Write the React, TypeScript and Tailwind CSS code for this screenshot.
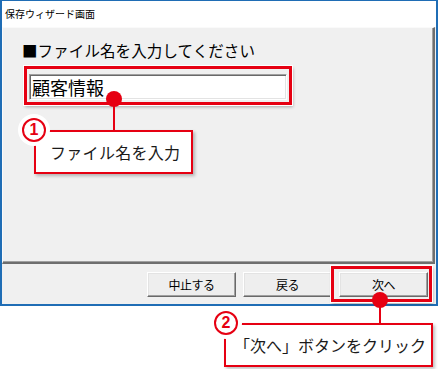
import React from "react";

const RED = "#e60012";

function Num({ n, x, y }: { n: string; x: number; y: number }) {
  return (
    <div
      className="absolute w-[32px] h-[32px] rounded-full bg-white flex items-center justify-center"
      style={{ left: x - 16, top: y - 16 }}
    >
      <div className="w-[24px] h-[24px] rounded-full border-2 border-[#e60012] flex items-center justify-center text-[#e60012] font-bold text-[16px] leading-none font-['Liberation_Sans',Arial,sans-serif]">
        {n}
      </div>
    </div>
  );
}

function Btn({ label }: { label: string }) {
  return (
    <div className="w-[89px] h-[25px] bg-[#eeeeee] border border-t-white border-l-white border-r-[#696969] border-b-[#696969] shadow-[inset_-1px_-1px_0_#a0a0a0,inset_1px_1px_0_#e3e3e3] flex items-center justify-center text-[12px] tracking-[-0.5px] text-black">
      {label}
    </div>
  );
}

export default function App() {
  return (
    <div className="relative w-[438px] h-[369px] bg-white overflow-hidden font-['Noto_Sans_CJK_JP','Noto_Sans',sans-serif]">
      {/* window */}
      <div className="w-[438px] h-[306px] border-x-2 border-b-2 border-t border-[#1f6db5] flex flex-col">
        <div className="h-[26px] bg-white flex items-center pl-[3px] text-[10px] text-black leading-none">
          保存ウィザード画面
        </div>
        <div className="flex-1 bg-[#f0f0f0] flex flex-col pr-[1px]">
          <div className="h-[237px] border-t border-l border-t-[#fafafa] border-l-[#fafafa] border-r-2 border-b-2 border-r-[#6e6e6e] border-b-[#6e6e6e] shadow-[inset_-1px_-1px_0_#a0a0a0] pt-[12px] pl-[19px] flex flex-col items-start">
            <div className="text-[15.5px] leading-[20px] text-black tracking-[0.1px]">
              ■ファイル名を入力してください
            </div>
            <div className="ml-[7px] mt-[14px] w-[258px] h-[26px] bg-white border border-t-[#a0a0a0] border-l-[#a0a0a0] border-r-white border-b-white shadow-[inset_1px_1px_0_#696969,inset_-1px_-1px_0_#e3e3e3] flex items-center pl-[2px] text-[18px] leading-none text-black">
              顧客情報
            </div>
          </div>
          <div className="flex-1 flex justify-end items-start pt-[8px] pr-[7px] gap-[7px]">
            <Btn label="中止する" />
            <Btn label="戻る" />
            <Btn label="次へ" />
          </div>
        </div>
      </div>

      {/* highlight 1 */}
      <div className="absolute left-[24px] top-[66px] w-[268px] h-[39px] border-[3px] border-[#e60012] shadow-[0_0_0_1px_#ffffff,1px_2px_3px_rgba(0,0,0,0.3)]" />
      {/* highlight 2 */}
      <div className="absolute left-[331px] top-[266px] w-[101px] h-[36px] border-[3px] border-[#e60012] shadow-[0_0_0_1px_#ffffff,1px_2px_3px_rgba(0,0,0,0.3)]" />

      {/* connector lines */}
      <div className="absolute left-[113px] top-[99px] w-[2px] h-[32px] bg-[#e60012]" />
      <div className="absolute left-[379px] top-[300px] w-[2px] h-[24px] bg-[#e60012]" />

      {/* dots */}
      <div className="absolute left-[106px] top-[91px] w-[16px] h-[16px] rounded-full bg-[#e60012]" />
      <div className="absolute left-[372px] top-[292px] w-[16px] h-[16px] rounded-full bg-[#e60012]" />

      {/* callout 1 */}
      <div className="absolute left-[34px] top-[130px] w-[159px] h-[44px] bg-white border-2 border-[#e60012] shadow-[2px_2px_3px_rgba(0,0,0,0.25)] flex items-center pl-[14px] text-[16px] tracking-[0.3px] text-[#1a1a1a] leading-none">
        ファイル名を入力
      </div>
      {/* callout 2 */}
      <div className="absolute left-[224px] top-[323px] w-[209px] h-[44px] bg-white border-2 border-[#e60012] shadow-[2px_2px_3px_rgba(0,0,0,0.25)] flex items-center pl-[8px] text-[16px] text-[#1a1a1a] leading-none">
        「次へ」ボタンをクリック
      </div>

      <Num n="1" x={34} y={130} />
      <Num n="2" x={226} y={323} />
      <span className="hidden">{RED}</span>
    </div>
  );
}
